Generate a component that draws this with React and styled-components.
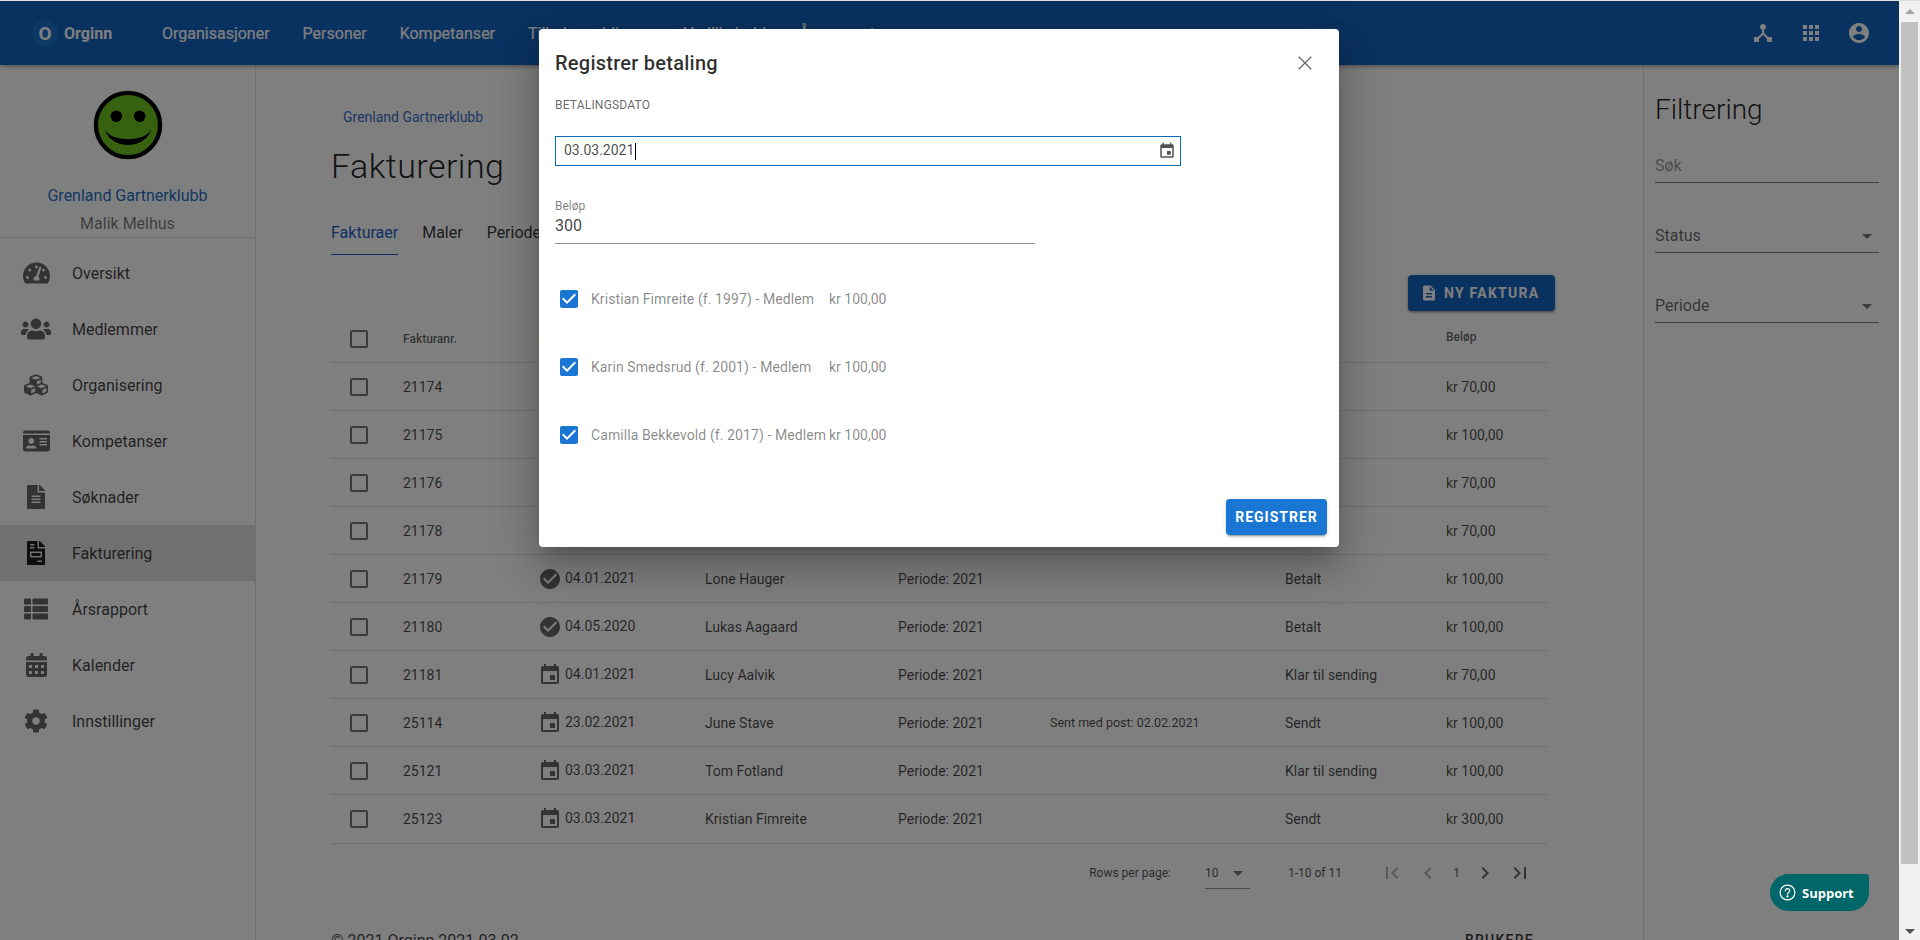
import React from 'react';
import styled, { createGlobalStyle } from 'styled-components';
import { FaTachometerAlt, FaUsers, FaCubes, FaIdCard, FaFileAlt, FaFileInvoice, FaThList, FaCalendarAlt, FaCog } from 'react-icons/fa';

const Global = createGlobalStyle`
  html, body { margin: 0; padding: 0; height: 100%; overflow: hidden; background: #fff; }
  body { font-family: Roboto, "Liberation Sans", sans-serif; font-size: 14px; color: rgba(0,0,0,.87); }
  * { box-sizing: border-box; }
`;

const P = {
  check: 'M12 2C6.48 2 2 6.48 2 12s4.48 10 10 10 10-4.48 10-10S17.52 2 12 2zm-2 15l-5-5 1.41-1.41L10 14.17l7.59-7.59L19 8l-9 9z',
  event: 'M17 12h-5v5h5v-5zM16 1v2H8V1H6v2H5c-1.11 0-1.99.9-1.99 2L3 19c0 1.1.89 2 2 2h14c1.1 0 2-.9 2-2V5c0-1.1-.9-2-2-2h-1V1h-2zm3 18H5V8h14v11z',
  box: 'M19 5v14H5V5h14m0-2H5c-1.1 0-2 .9-2 2v14c0 1.1.9 2 2 2h14c1.1 0 2-.9 2-2V5c0-1.1-.9-2-2-2z',
  boxChecked: 'M19 3H5c-1.11 0-2 .9-2 2v14c0 1.1.89 2 2 2h14c1.11 0 2-.9 2-2V5c0-1.1-.89-2-2-2zm-9 14l-5-5 1.41-1.41L10 14.17l7.59-7.59L19 8l-9 9z',
  hub: 'M17 16l-4-4V8.82C14.16 8.4 15 7.3 15 6c0-1.66-1.34-3-3-3S9 4.34 9 6c0 1.3.84 2.4 2 2.82V12l-4 4H3v5h5v-3.05l4-4.2 4 4.2V21h5v-5h-4z',
  apps: 'M4 8h4V4H4v4zm6 12h4v-4h-4v4zm-6 0h4v-4H4v4zm0-6h4v-4H4v4zm6 0h4v-4h-4v4zm6-10v4h4V4h-4zm-6 4h4V4h-4v4zm6 6h4v-4h-4v4zm0 6h4v-4h-4v4z',
  account: 'M12 2C6.48 2 2 6.48 2 12s4.48 10 10 10 10-4.48 10-10S17.52 2 12 2zm0 3c1.66 0 3 1.34 3 3s-1.34 3-3 3-3-1.34-3-3 1.34-3 3-3zm0 14.2c-2.5 0-4.71-1.28-6-3.22.03-1.99 4-3.08 6-3.08 1.99 0 5.97 1.09 6 3.08-1.29 1.94-3.5 3.22-6 3.22z',
  first: 'M18.41 16.59L13.82 12l4.59-4.59L17 6l-6 6 6 6zM6 6h2v12H6z',
  prev: 'M15.41 7.41L14 6l-6 6 6 6 1.41-1.41L10.83 12z',
  next: 'M10 6L8.59 7.41 13.17 12l-4.58 4.59L10 18l6-6z',
  last: 'M5.59 7.41L10.18 12l-4.59 4.59L7 18l6-6-6-6zM16 6h2v12h-2z',
  drop: 'M7 10l5 5 5-5z',
  doc: 'M14 2H6c-1.1 0-1.99.9-1.99 2L4 20c0 1.1.89 2 1.99 2H18c1.1 0 2-.9 2-2V8l-6-6zm2 16H8v-2h8v2zm0-4H8v-2h8v2zm-3-5V3.5L18.5 9H13z',
};

const Glyph = styled.svg.attrs({ viewBox: '0 0 24 24' })`
  width: ${p => p.$size || 24}px;
  height: ${p => p.$size || 24}px;
  fill: ${p => p.$color || 'rgba(0,0,0,.54)'};
  flex: none;
  display: block;
`;
const Icon = ({ d, size, color }) => <Glyph $size={size} $color={color}><path d={d} /></Glyph>;

const Window = styled.div`display: flex; flex-direction: column; width: 1920px; height: 940px; overflow: hidden;`;
const TopEdge = styled.div`height: 1px; background: #dedede; flex: none;`;
const Viewport = styled.div`display: flex; flex: 1; min-height: 0;`;
const Page = styled.div`position: relative; width: 1899px; flex: none; display: flex; flex-direction: column; overflow: hidden; background: #fff;`;

const AppBar = styled.header`
  height: 64px; flex: none; background: #1565c0; color: #fff; display: flex; align-items: center;
  box-shadow: 0 2px 4px rgba(0,0,0,.3); position: relative; z-index: 1; padding-left: 32px;
`;
const LogoMark = styled.div`
  width: 26px; height: 26px; border-radius: 50%; background: #1a72cf; display: flex; align-items: center; justify-content: center;
  font-weight: 700; font-size: 19px; flex: none;
`;
const LogoText = styled.div`font-weight: 700; font-size: 16px; margin-left: 6px; width: 98px; letter-spacing: .05px;`;
const NavItem = styled.div`font-size: 16px; font-weight: 400; margin-right: 33px; white-space: nowrap; -webkit-text-stroke: .2px #fff;`;
const BarIcons = styled.div`margin-left: auto; display: flex; gap: 24px; padding-right: 28px;`;

const Body = styled.div`display: flex; flex: 1; min-height: 0;`;
const Sidebar = styled.aside`width: 256px; flex: none; border-right: 1px solid rgba(0,0,0,.12);`;
const Profile = styled.div`
  padding-top: 25px; height: 173px; border-bottom: 1px solid rgba(0,0,0,.12); display: flex; flex-direction: column; align-items: center;
  svg { flex: none; }
`;
const OrgName = styled.div`font-size: 16px; line-height: 24px; color: #1e6fc4; margin-top: 24px;`;
const UserName = styled.div`font-size: 16px; line-height: 24px; color: rgba(0,0,0,.54); margin-top: 4px;`;
const Menu = styled.nav`padding-top: 7px;`;
const MenuItem = styled.div`
  height: 56px; display: flex; align-items: center; padding-left: 16px; font-size: 16px;
  background: ${p => (p.$active ? 'rgba(0,0,0,.12)' : 'transparent')};
  color: rgba(0,0,0,.75);
`;
const MenuIcon = styled.div`
  width: 40px; margin-right: 16px; display: flex; justify-content: center;
  color: ${p => (p.$active ? 'rgba(0,0,0,.87)' : 'rgba(0,0,0,.6)')};
  svg { display: block; height: 24px; width: ${p => p.$w}px; flex: none; }
`;

const Main = styled.main`flex: 1; min-width: 0; padding: 42px 96px 0 75px;`;
const Crumb = styled.div`font-size: 14px; line-height: 20px; color: #1e5fc4; padding-left: 12px; opacity: .9;`;
const Title = styled.h1`margin: 18px 0 0; font-weight: 300; font-size: 34px; line-height: 42px; letter-spacing: .45px; color: rgba(0,0,0,.87);`;
const Tabs = styled.div`display: flex; gap: 24px; margin-top: 26px; height: 42px;`;
const Tab = styled.div`
  font-size: 16px; line-height: 40px; height: 42px; white-space: nowrap;
  color: ${p => (p.$active ? '#1e5fc4' : 'rgba(0,0,0,.8)')};
  border-bottom: 1px solid ${p => (p.$active ? '#1e5fc4' : 'transparent')};
`;
const ActionRow = styled.div`display: flex; justify-content: flex-end; margin: 20px -8px 0 0;`;
const PrimaryDark = styled.div`
  height: 36px; width: 147px; background: #1565c0; color: #fff; border-radius: 4px; display: flex; align-items: center; gap: 6px; padding-left: 12px;
  font-size: 14px; font-weight: 700; letter-spacing: 1.25px; text-transform: uppercase;
  box-shadow: 0 1px 3px rgba(0,0,0,.3), 0 2px 2px rgba(0,0,0,.14);
`;
const Table = styled.div`margin-top: 4px;`;
const Row = styled.div`
  display: grid; grid-template-columns: 72px 135px 167px 193px 152px 235px 161px 101px; align-items: center;
  height: ${p => (p.$last ? 49 : 48)}px; border-bottom: 1px solid rgba(0,0,0,.12); font-size: 14px; color: rgba(0,0,0,.72);
`;
const HeadCell = styled.div`font-size: 12px; font-weight: 500; color: rgba(0,0,0,.62); ${p => p.$raised && 'margin-top: -4px;'}`;
const CheckCell = styled.div`padding-left: 16px;`;
const DateCell = styled.div`display: flex; align-items: center; gap: 3px; span { margin-top: -2px; }`;
const NoteCell = styled.div`font-size: 12.5px; margin-top: -1px;`;

const Pager = styled.div`display: flex; align-items: center; justify-content: flex-end; height: 58px; padding-right: 15px; font-size: 12px; color: rgba(0,0,0,.7);`;
const PageSize = styled.div`
  width: 45px; height: 32px; margin: 0 38px 0 34px; border-bottom: 1px solid rgba(0,0,0,.42); display: flex; align-items: center; justify-content: space-between;
`;
const PagerButtons = styled.div`display: flex; align-items: center; margin-left: 38px;`;
const PageNumber = styled.div`width: 33px; text-align: center; font-size: 12px;`;
const PagerGap = styled.div`width: ${p => p.$w}px;`;
const Footer = styled.div`display: flex; justify-content: space-between; align-items: center; height: 24px; margin-top: 26px; padding-right: 13px;`;
const Copy = styled.div`font-size: 16px; color: rgba(0,0,0,.75);`;
const FooterLink = styled.div`font-size: 14px; font-weight: 500; letter-spacing: 1.25px; color: rgba(0,0,0,.8);`;

const FilterPanel = styled.aside`width: 256px; flex: none; border-left: 1px solid rgba(0,0,0,.12); padding: 27px 20px 0 11px;`;
const FilterTitle = styled.h2`margin: 0 0 23px; font-weight: 300; font-size: 28px; line-height: 36px; color: rgba(0,0,0,.87);`;
const Field = styled.div`
  height: 32px; margin-bottom: 38px; padding-bottom: 2px; border-bottom: 1px solid rgba(0,0,0,.5); display: flex; align-items: center; justify-content: space-between;
  font-size: 16px; color: ${p => (p.$muted ? 'rgba(0,0,0,.42)' : 'rgba(0,0,0,.6)')};
`;

const Overlay = styled.div`position: absolute; inset: 0; background: rgba(0,0,0,.5); z-index: 5; padding: 28px 0 0 539px;`;
const Dialog = styled.div`
  width: 800px; height: 518px; background: #fff; border-radius: 4px; overflow: hidden; display: flex; flex-direction: column; padding: 18px 12px 12px 16px;
  box-shadow: 0 11px 15px -7px rgba(0,0,0,.2), 0 24px 38px 3px rgba(0,0,0,.14), 0 9px 46px 8px rgba(0,0,0,.12);
`;
const DialogHead = styled.div`display: flex; align-items: center; justify-content: space-between; height: 32px; padding-right: 15px;`;
const DialogTitle = styled.div`font-size: 20px; font-weight: 500; letter-spacing: .25px; color: rgba(0,0,0,.82);`;
const CloseMark = styled.svg.attrs({ viewBox: '0 0 14 14' })`
  width: 14px; height: 14px; display: block; stroke: #666; stroke-width: 1.3; fill: none;
`;
const SectionLabel = styled.div`font-size: 12px; line-height: 16px; margin-top: 18px; color: rgba(0,0,0,.62); text-transform: uppercase; letter-spacing: .2px;`;
const DateInput = styled.div`
  width: 626px; height: 30px; margin-top: 23px; border: 1px solid #0a6ebd; display: flex; align-items: center; justify-content: space-between; padding: 0 4px 0 8px; font-size: 14px; color: rgba(0,0,0,.72);
`;
const Caret = styled.span`display: inline-block; width: 1px; height: 17px; background: #000; margin-left: 1px; vertical-align: middle;`;
const AmountField = styled.div`width: 480px; margin-top: 33px; padding-bottom: 5px; border-bottom: 1px solid rgba(0,0,0,.42);`;
const AmountLabel = styled.div`font-size: 12px; line-height: 14px; color: rgba(0,0,0,.5);`;
const AmountValue = styled.div`font-size: 16px; line-height: 24px; margin-top: 1px; color: rgba(0,0,0,.75);`;
const Members = styled.div`margin-top: 21px;`;
const Member = styled.div`height: 68px; display: flex; align-items: center; padding-left: 2px; font-size: 14px; color: rgba(0,0,0,.48);`;
const MemberName = styled.div`width: 238px; margin-left: 10px; white-space: nowrap; letter-spacing: .09px;`;
const DialogActions = styled.div`display: flex; justify-content: flex-end; margin-top: 30px;`;
const PrimaryButton = styled.div`
  width: 101px; height: 36px; background: #1976d2; color: #fff; border-radius: 4px; display: flex; align-items: center; justify-content: center;
  font-size: 14px; font-weight: 700; letter-spacing: 1px; text-transform: uppercase;
  box-shadow: 0 3px 1px -2px rgba(0,0,0,.2), 0 2px 2px rgba(0,0,0,.14), 0 1px 5px rgba(0,0,0,.12);
`;

const SupportButton = styled.div`
  position: absolute; left: 1770px; top: 873px; width: 99px; height: 37px; z-index: 9; background: #00666a; color: #fff;
  border-radius: 18.5px 3px 18.5px 18.5px; display: flex; align-items: center; gap: 6px; padding-left: 9px;
  font-family: "Open Sans", Roboto, sans-serif; font-weight: 700; font-size: 13px;
`;

const ScrollTrack = styled.div`width: 21px; flex: none; background: #f1f1f1; display: flex; flex-direction: column; align-items: center;`;
const ScrollArrow = styled.div`
  height: ${p => p.$h}px; flex: none; display: flex; align-items: center; justify-content: center;
  ${p => p.$down && 'margin-top: auto;'}
  &::before { content: ''; border-left: 5px solid transparent; border-right: 5px solid transparent;
    ${p => (p.$down ? 'border-top: 5px solid #505050;' : 'border-bottom: 5px solid #a3a3a3;')} }
`;
const ScrollThumb = styled.div`width: 17px; height: 842px; background: #c1c1c1; flex: none;`;

const Smiley = () => (
  <svg width="70" height="70" viewBox="0 0 72 72">
    <circle cx="36" cy="36" r="33" fill="#6cc21e" stroke="#000" strokeWidth="4.5" />
    <circle cx="24" cy="27" r="6" fill="#000" />
    <circle cx="48" cy="27" r="6" fill="#000" />
    <path d="M12 40 C18 62 54 62 60 40 C54 54 18 54 12 40 Z" fill="#000" />
  </svg>
);

const menu = [
  [FaTachometerAlt, 'Oversikt', 27], [FaUsers, 'Medlemmer', 30], [FaCubes, 'Organisering', 24], [FaIdCard, 'Kompetanser', 27],
  [FaFileAlt, 'Søknader', 18], [FaFileInvoice, 'Fakturering', 18, true], [FaThList, 'Årsrapport', 24], [FaCalendarAlt, 'Kalender', 21], [FaCog, 'Innstillinger', 24],
];

const rows = [
  ['21174', 'check', '04.01.2021', 'Eva Lunde', '', 'Betalt', 'kr 70,00'],
  ['21175', 'check', '04.01.2021', 'Ola Berge', '', 'Betalt', 'kr 100,00'],
  ['21176', 'check', '04.01.2021', 'Anne Moen', '', 'Betalt', 'kr 70,00'],
  ['21178', 'check', '04.01.2021', 'Per Dale', '', 'Betalt', 'kr 70,00'],
  ['21179', 'check', '04.01.2021', 'Lone Hauger', '', 'Betalt', 'kr 100,00'],
  ['21180', 'check', '04.05.2020', 'Lukas Aagaard', '', 'Betalt', 'kr 100,00'],
  ['21181', 'event', '04.01.2021', 'Lucy Aalvik', '', 'Klar til sending', 'kr 70,00'],
  ['25114', 'event', '23.02.2021', 'June Stave', 'Sent med post: 02.02.2021', 'Sendt', 'kr 100,00'],
  ['25121', 'event', '03.03.2021', 'Tom Fotland', '', 'Klar til sending', 'kr 100,00'],
  ['25123', 'event', '03.03.2021', 'Kristian Fimreite', '', 'Sendt', 'kr 300,00'],
];

const members = [
  ['Kristian Fimreite (f. 1997) - Medlem', 'kr 100,00'],
  ['Karin Smedsrud (f. 2001) - Medlem', 'kr 100,00'],
  ['Camilla Bekkevold (f. 2017) - Medlem', 'kr 100,00'],
];

export default function App() {
  return (
    <>
      <Global />
      <Window>
        <TopEdge />
        <Viewport>
          <Page>
            <AppBar>
              <LogoMark>O</LogoMark>
              <LogoText>Orginn</LogoText>
              {['Organisasjoner', 'Personer', 'Kompetanser', 'Tilbakemeldinger', 'Vedlikehold', 'Årsrapport'].map(n => <NavItem key={n}>{n}</NavItem>)}
              <BarIcons>
                <Icon d={P.hub} color="#fff" />
                <Icon d={P.apps} color="#fff" />
                <Icon d={P.account} color="#fff" />
              </BarIcons>
            </AppBar>
            <Body>
              <Sidebar>
                <Profile>
                  <Smiley />
                  <OrgName>Grenland Gartnerklubb</OrgName>
                  <UserName>Malik Melhus</UserName>
                </Profile>
                <Menu>
                  {menu.map(([I, label, w, active]) => (
                    <MenuItem key={label} $active={active}>
                      <MenuIcon $active={active} $w={w}><I /></MenuIcon>
                      {label}
                    </MenuItem>
                  ))}
                </Menu>
              </Sidebar>
              <Main>
                <Crumb>Grenland Gartnerklubb</Crumb>
                <Title>Fakturering</Title>
                <Tabs>
                  <Tab $active>Fakturaer</Tab>
                  <Tab>Maler</Tab>
                  <Tab>Perioder</Tab>
                </Tabs>
                <ActionRow>
                  <PrimaryDark><Icon d={P.doc} size={18} color="#fff" /> Ny faktura</PrimaryDark>
                </ActionRow>
                <Table>
                  <Row>
                    <CheckCell><Icon d={P.box} /></CheckCell>
                    <HeadCell>Fakturanr.</HeadCell>
                    <HeadCell>Dato</HeadCell>
                    <HeadCell>Navn</HeadCell>
                    <HeadCell>Beskrivelse</HeadCell>
                    <HeadCell>Merknad</HeadCell>
                    <HeadCell>Status</HeadCell>
                    <HeadCell $raised>Beløp</HeadCell>
                  </Row>
                  {rows.map((r, i) => (
                    <Row key={r[0]} $last={i === rows.length - 1}>
                      <CheckCell><Icon d={P.box} /></CheckCell>
                      <div>{r[0]}</div>
                      <DateCell><Icon d={P[r[1]]} color="rgba(0,0,0,.6)" /><span>{r[2]}</span></DateCell>
                      <div>{r[3]}</div>
                      <div>Periode: 2021</div>
                      <NoteCell>{r[4]}</NoteCell>
                      <div>{r[5]}</div>
                      <div>{r[6]}</div>
                    </Row>
                  ))}
                </Table>
                <Pager>
                  <span>Rows per page:</span>
                  <PageSize><span>10</span><Icon d={P.drop} /></PageSize>
                  <span>1-10 of 11</span>
                  <PagerButtons>
                    <Icon d={P.first} color="rgba(0,0,0,.3)" />
                    <PagerGap $w={12} />
                    <Icon d={P.prev} color="rgba(0,0,0,.3)" />
                    <PageNumber>1</PageNumber>
                    <Icon d={P.next} color="rgba(0,0,0,.6)" />
                    <PagerGap $w={11} />
                    <Icon d={P.last} color="rgba(0,0,0,.6)" />
                  </PagerButtons>
                </Pager>
                <Footer>
                  <Copy>© 2021 Orginn 2021.03.02</Copy>
                  <FooterLink>BRUKERE</FooterLink>
                </Footer>
              </Main>
              <FilterPanel>
                <FilterTitle>Filtrering</FilterTitle>
                <Field $muted>Søk</Field>
                <Field>Status<Icon d={P.drop} /></Field>
                <Field>Periode<Icon d={P.drop} /></Field>
              </FilterPanel>
            </Body>
            <Overlay>
              <Dialog>
                <DialogHead>
                  <DialogTitle>Registrer betaling</DialogTitle>
                  <CloseMark><path d="M.7.7l12.6 12.6M13.3.7L.7 13.3" /></CloseMark>
                </DialogHead>
                <SectionLabel>Betalingsdato</SectionLabel>
                <DateInput>
                  <span>03.03.2021<Caret /></span>
                  <Icon d={P.event} size={18} color="rgba(0,0,0,.68)" />
                </DateInput>
                <AmountField>
                  <AmountLabel>Beløp</AmountLabel>
                  <AmountValue>300</AmountValue>
                </AmountField>
                <Members>
                  {members.map(([n, a]) => (
                    <Member key={n}>
                      <Icon d={P.boxChecked} color="#1976d2" />
                      <MemberName>{n}</MemberName>
                      <span>{a}</span>
                    </Member>
                  ))}
                </Members>
                <DialogActions><PrimaryButton>Registrer</PrimaryButton></DialogActions>
              </Dialog>
            </Overlay>
            <SupportButton>
              <svg width="17" height="17" viewBox="0 0 17 17" fill="none" stroke="#fff" strokeWidth="1.2">
                <circle cx="8.5" cy="8.5" r="7.4" />
                <path d="M6.3 6.7c0-1.3 1-2.1 2.2-2.1s2.2.8 2.2 2c0 1.8-2.2 1.7-2.2 3.5" strokeLinecap="round" />
                <circle cx="8.5" cy="12.4" r=".5" fill="#fff" />
              </svg>
              Support
            </SupportButton>
          </Page>
          <ScrollTrack>
            <ScrollArrow $h={21} />
            <ScrollThumb />
            <ScrollArrow $h={17} $down />
          </ScrollTrack>
        </Viewport>
      </Window>
    </>
  );
}
